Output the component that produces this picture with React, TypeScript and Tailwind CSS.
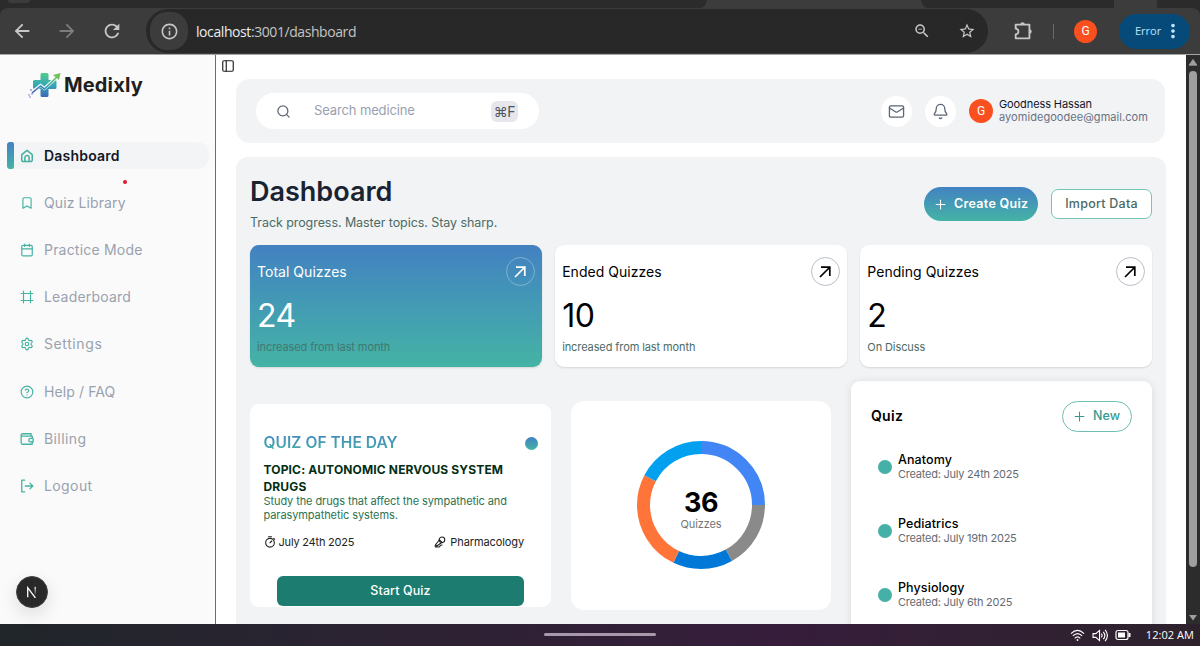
import React from "react";
import {
  PanelLeft, Search, Mail, Bell, Bookmark, Calendar, Frame, Settings, CircleQuestionMark, Plus,
} from "lucide-react";
import { MdArrowBack, MdArrowForward, MdRefresh, MdInfoOutline, MdOutlineZoomOut, MdStarBorder, MdMoreVert } from "react-icons/md";

const HomeIcon = () => (
  <svg viewBox="0 0 24 24" className="size-[14px]" fill="none" stroke="currentColor" strokeWidth="2.6" strokeLinecap="round" strokeLinejoin="round">
    <path d="M3 9.500 12 2.500l9 7V19a2.500 2.500 0 0 1-2.500 2.500h-13A2.500 2.500 0 0 1 3 19Z" />
    <path d="M8.300 21v-6a3.700 3.700 0 0 1 7.400 0v6" />
  </svg>
);
const WalletIcon = () => (
  <svg viewBox="0 0 24 24" className="size-[14px]" fill="none" stroke="currentColor" strokeWidth="2.200" strokeLinecap="round" strokeLinejoin="round">
    <path d="M19 7V3H4a2 2 0 0 0 0 4h17v4M2 5v14a2 2 0 0 0 2 2h17v-4" />
    <path d="M22.500 11H18a3 3 0 0 0 0 6h4.500Z" />
  </svg>
);
const LogoutIcon = () => (
  <svg viewBox="0 0 24 24" className="size-[14px]" fill="none" stroke="currentColor" strokeWidth="2.200" strokeLinecap="round" strokeLinejoin="round">
    <path d="M8 2H3v20h5M9 12h13M17 7l5 5-5 5" />
  </svg>
);
const StopwatchIcon = () => (
  <svg viewBox="0 0 24 24" className="size-[12px]" fill="none" stroke="currentColor" strokeWidth="2.200" strokeLinecap="round">
    <circle cx="12" cy="13.500" r="8.700" />
    <path d="M9 1.500h6M12 13.500l3.500-3.500M19.500 5l1.500 1.500" />
  </svg>
);
const VocalIcon = () => (
  <svg viewBox="0 0 24 24" className="size-[12px]" fill="none" stroke="currentColor" strokeWidth="2.200" strokeLinecap="round" strokeLinejoin="round">
    <circle cx="16" cy="7.500" r="5.500" />
    <path d="M10.500 8 3 17.500 5.500 20l10-7M10.500 7.500l6 6M3 17.500Q1 22 5 22h4q3 0 3-2t3-2h1" />
  </svg>
);

const nav = [
  { label: "Quiz Library", icon: <Bookmark size={14} />, cls: "tracking-[0.1px]" },
  { label: "Practice Mode", icon: <Calendar size={14} />, cls: "tracking-[0.2px]" },
  { label: "Leaderboard", icon: <Frame size={14} />, cls: "tracking-[0.2px]" },
  { label: "Settings", icon: <Settings size={14} />, cls: "tracking-[0.6px]" },
  { label: "Help / FAQ", icon: <CircleQuestionMark size={14} />, cls: "tracking-[0.1px]" },
  { label: "Billing", icon: <WalletIcon />, cls: "tracking-[0.4px]" },
  { label: "Logout", icon: <LogoutIcon />, cls: "tracking-[0.4px]" },
];

function Logo() {
  return (
    <svg viewBox="0 0 34 28" className="h-[28px] w-[34px]">
      <defs>
        <linearGradient id="cross" x1="0" y1="0" x2="0" y2="1">
          <stop offset="0" stopColor="#52c98f" />
          <stop offset="0.5" stopColor="#35a8b5" />
          <stop offset="1" stopColor="#3c67b8" />
        </linearGradient>
        <linearGradient id="trend" x1="0" y1="1" x2="1" y2="0">
          <stop offset="0" stopColor="#4b55b5" />
          <stop offset="0.5" stopColor="#2ba3b5" />
          <stop offset="1" stopColor="#78c850" />
        </linearGradient>
      </defs>
      <path d="M14 2h5q1.500 0 1.500 1.500V9h6.500q1.500 0 1.500 1.500v6q0 1.500-1.500 1.500h-6.500v6.500q0 1.500-1.500 1.500h-5q-1.500 0-1.500-1.500V18H6.500Q5 18 5 16.500v-6Q5 9 6.500 9h6V3.500Q12.500 2 14 2Z" fill="url(#cross)" />
      <path d="m3 22 9.500-7.500 4 3L29 6" fill="none" stroke="#fafafa" strokeWidth="3.200" />
      <path d="m4 22 8.500-7 4 3L30 5" fill="none" stroke="url(#trend)" strokeWidth="1.600" />
      <path d="m25 4 7.500-2-1.500 7Z" fill="#70c35a" />
      <g fill="#5561b5"><circle cx="3" cy="19" r="0.800" /><circle cx="1" cy="24" r="0.700" /><circle cx="4" cy="23" r="0.700" /><circle cx="2" cy="26" r="0.700" /></g>
    </svg>
  );
}

function BrowserBar() {
  return (
    <header className="h-[54px] shrink-0 bg-[#2b2b2b]">
      <div className="flex h-2">
        <div className="ml-2 h-[3px] w-[22px] rounded-b-full bg-[#3c3c3c]" />
        <svg viewBox="0 0 228 8" className="ml-[670px] h-2 w-[228px]"><path d="M0 8q6-1 7-8h214q1 7 7 8Z" fill="#3c3c3c" /></svg>
        <div className="ml-auto mr-[43px] h-2 w-[43px] bg-[#3c3c3c]" />
      </div>
      <div className="flex h-[46px] items-center rounded-t-lg bg-[#3c3c3c] text-[#c7c7c7]">
        <MdArrowBack size={22} className="ml-[11px]" />
        <MdArrowForward size={22} className="ml-[23px] text-[#7d7d7d]" />
        <MdRefresh size={22} className="ml-[23px]" />
        <div className="ml-[23px] flex h-[44px] w-[842px] items-center rounded-full bg-[#282828] pl-[4px]">
          <span className="flex size-[38px] items-center justify-center rounded-[17px] bg-[#3c3c3c]"><MdInfoOutline size={19} /></span>
          <span className="ml-[8px] font-['Open_Sans',sans-serif] text-[14px] tracking-[-0.420px] text-[#c4c4c4]"><span className="text-[#ececec]">localhost</span>:3001/dashboard</span>
          <MdOutlineZoomOut size={18} className="ml-auto" />
          <MdStarBorder size={18} className="mr-[12px] ml-[27px]" />
        </div>
        <svg viewBox="0 0 24 24" className="ml-[24px] size-[22px]" fill="none" stroke="currentColor" strokeWidth="2" strokeLinejoin="round">
          <path d="M4 5h15v15H4v-4.300q3-.4 3-3.200t-3-3.200Z" />
          <path d="M9 5a2.500 2.500 0 0 1 5 0ZM19 10a2.500 2.500 0 0 1 0 5Z" fill="currentColor" stroke="none" />
        </svg>
        <span className="ml-[19px] h-[15px] w-px bg-[#6b6b6b]" />
        <span className="ml-[20px] flex size-[23px] items-center justify-center rounded-full bg-[#fa4f1f] font-['Roboto',sans-serif] text-[12px] text-white">G</span>
        <div className="ml-[22px] flex h-[35px] w-[71px] items-center rounded-full bg-[#054a78] pl-[16px] font-['Open_Sans',sans-serif] text-[11px] text-[#bfe3fc]">
          Error
          <MdMoreVert size={22} className="ml-px" />
        </div>
      </div>
    </header>
  );
}

function Sidebar() {
  return (
    <aside className="relative mr-px flex h-full w-[216px] shrink-0 flex-col border-r border-[#6e6e6e] bg-[#fafafa]">
      <div className="mt-[16px] ml-[28px] flex h-[28px] items-center">
        <Logo />
        <span className="ml-[2px] font-['Inter',sans-serif] text-[20px] font-bold tracking-[0.150px] text-[#1f1f21]">Medixly</span>
      </div>
      <div className="mt-[43px] ml-[7px] flex h-[27px] items-center">
        <span className="h-full w-[7px] rounded-l-[3px] rounded-r-[2px] bg-linear-to-b from-[#4381c1] to-[#45b3a4]" />
        <div className="flex h-full w-[195px] items-center rounded-r-xl bg-[#f3f4f6] pl-[6px] text-[#45b0a0]">
          <HomeIcon />
          <span className="mb-px ml-[10px] text-[14px] font-semibold tracking-[0.200px] text-[#111827]">Dashboard</span>
        </div>
      </div>
      <nav className="mt-[20px] flex flex-col gap-[20.300px] pl-[20px]">
        {nav.map((n) => (
          <div key={n.label} className="flex h-[27px] items-center gap-[10px] text-[#45b3a4]">
            {n.icon}
            <span className={"mb-px text-[14px] text-[#99a1af] " + n.cls}>{n.label}</span>
          </div>
        ))}
      </nav>
      <span className="absolute top-[125px] left-[123px] size-1 rounded-full bg-[#e5142b]" />
      <span className="absolute top-[521px] left-[16px] flex size-8 items-center justify-center rounded-full border border-[#454545] bg-[#292929] shadow-[0_6px_18px_rgba(0,0,0,0.12)]">
        <svg viewBox="0 0 14 14" className="size-[12px]" fill="none" strokeWidth="1.500">
          <defs><linearGradient id="nr" x1="0" y1="0" x2="0" y2="1"><stop stopColor="#fff" /><stop offset="1" stopColor="#fff" stopOpacity="0" /></linearGradient></defs>
          <path d="M2 13V2l9 12" stroke="#fff" /><rect x="10" y="1" width="1.500" height="10" fill="url(#nr)" />
        </svg>
      </span>
    </aside>
  );
}

function TopBar() {
  return (
    <div className="mr-px flex h-[64px] items-center rounded-[14px] bg-[#f2f3f5] pr-[17px] pl-[20px]">
      <div className="flex h-[36px] w-[283px] items-center rounded-full bg-white pr-[21px] pl-[20px]">
        <Search size={15} className="text-[#5b6575]" />
        <span className="ml-[23px] text-[13px] tracking-[-0.130px] text-[#99a1af]">Search medicine</span>
        <kbd className="ml-auto flex h-[21px] w-[27px] items-center justify-center rounded-[6px] bg-[#e5e7eb] font-['Inter','DejaVu_Sans',sans-serif] text-[14px] tracking-[-0.300px] text-[#4a5565]">⌘F</kbd>
      </div>
      <span className="ml-auto flex size-[31px] items-center justify-center rounded-full bg-white text-[#5b6575]"><Mail size={17} strokeWidth={1.800} /></span>
      <span className="ml-[13px] flex size-[31px] items-center justify-center rounded-full bg-white text-[#5b6575]"><Bell size={17} strokeWidth={1.800} /></span>
      <span className="ml-[13px] flex size-[24px] items-center justify-center rounded-full bg-[#fa4f1f] font-['Roboto',sans-serif] text-[12px] text-white">G</span>
      <div className="ml-[6px] w-[149px] text-[11px] leading-[13.500px] whitespace-nowrap">
        <p className="tracking-[-0.100px] text-[#101828]">Goodness Hassan</p>
        <p className="tracking-[0.050px] text-[#6a7282]">ayomidegoodee@gmail.com</p>
      </div>
    </div>
  );
}

const stats = [
  { title: "Total Quizzes", value: "24", note: "increased from last month", active: true },
  { title: "Ended Quizzes", value: "10", note: "increased from last month", active: false },
  { title: "Pending Quizzes", value: "2", note: "On Discuss", active: false },
];

function StatCard({ s }: { s: (typeof stats)[number] }) {
  return (
    <div className={"flex h-[122px] flex-col rounded-[9px] px-[7px] pt-[12px] shadow-[0_1px_2px_rgba(0,0,0,0.12)] " + (s.active ? "bg-linear-to-b from-[#4381c1] to-[#45b3a4] text-white" : "bg-white text-black")}>
      <div className="flex h-[29px] items-center justify-between">
        <span className="text-[14px] tracking-[0.030px]">{s.title}</span>
        <span className={"flex size-[29px] items-center justify-center rounded-full border " + (s.active ? "border-white/30" : "border-[#b8bec8]")}>
          <svg viewBox="0 0 14 14" className="size-[14px]" fill="none" stroke="currentColor" strokeWidth="1.700"><path d="m2 12 9.500-9.500M3 2.200h8.800V11" /></svg>
        </span>
      </div>
      <span className="mt-[11px] text-[32px] leading-[38px] tracking-[-0.500px]">{s.value}</span>
      <span className={"mt-[5px] text-[11px] leading-[14px] tracking-[-0.100px] " + (s.active ? "text-[#41786f]" : "text-[#4b6b66]")}>{s.note}</span>
    </div>
  );
}

const segments = [
  { from: 0, len: 90, color: "#4285f4" },
  { from: 90, len: 61, color: "#8a8a8a" },
  { from: 151, len: 54.6, color: "#0078d7" },
  { from: 205.6, len: 92.2, color: "#ff7439" },
  { from: 297.8, len: 62.2, color: "#03a0f0" },
];

function Donut() {
  return (
    <div className="mt-[20px] flex h-[209px] w-[260px] items-center justify-center rounded-[13px] bg-white">
      <div className="mb-[2px] grid place-items-center">
        <svg viewBox="0 0 128 128" className="col-start-1 row-start-1 size-[128px] -rotate-90">
          {segments.map((g) => (
            <circle key={g.from} cx="64" cy="64" r="57.500" fill="none" stroke={g.color} strokeWidth="13" pathLength="360" strokeDasharray={`${g.len} ${360 - g.len}`} strokeDashoffset={-g.from} />
          ))}
        </svg>
        <div className="col-start-1 row-start-1 flex flex-col items-center pt-[11px]">
          <span className="text-[27px] leading-[28px] font-bold tracking-[-0.600px] text-black">36</span>
          <span className="text-[11px] leading-[14px] tracking-[-0.100px] text-[#757575]">Quizzes</span>
        </div>
      </div>
    </div>
  );
}

const quizzes = [
  { name: "Anatomy", date: "Created: July 24th 2025" },
  { name: "Pediatrics", date: "Created: July 19th 2025" },
  { name: "Physiology", date: "Created: July 6th 2025" },
];

export default function App() {
  return (
    <div className="flex h-[646px] w-[1200px] flex-col overflow-hidden bg-white font-['Inter',sans-serif] antialiased">
      <BrowserBar />
      <div className="flex h-[570px] shrink-0 border-t border-[#a5a5a5]">
        <Sidebar />
        <main className="h-[569px] w-[969px] overflow-hidden bg-white">
          <PanelLeft size={14} className="mt-[4px] ml-[4px] text-[#222]" />
          <div className="mt-[6px] ml-[19px] w-[930px]">
            <TopBar />
            <section className="mt-[14px] mr-[0.500px] h-[480px] rounded-t-[12px] bg-[#f2f3f5] pr-[13.500px] pl-[14px]">
              <div className="flex h-[88px] justify-between">
                <div className="pt-[18px]">
                  <h1 className="text-[27px] leading-[34px] font-semibold tracking-[0px] text-[#1a2331]">Dashboard</h1>
                  <p className="mt-[5px] text-[12.500px] leading-[18px] tracking-[-0.070px] text-[#4b6b66]">Track progress. Master topics. Stay sharp.</p>
                </div>
                <div className="flex items-center gap-[13px] pt-[6px]">
                  <button className="flex h-[34px] w-[114px] items-center rounded-full bg-linear-to-b from-[#4381c1] to-[#45b3a4] pl-[9px] text-[12.500px] font-semibold tracking-[0.300px] whitespace-nowrap text-white"><Plus size={15} strokeWidth={1.700} className="mr-[6px]" />Create Quiz</button>
                  <button className="h-[30px] w-[101px] rounded-[7px] border border-[#76c5ba] bg-white text-[12.500px] font-medium tracking-[0.250px] text-[#4b6b66]">Import Data</button>
                </div>
              </div>
              <div className="grid grid-cols-3 gap-[13.500px]">{stats.map((s) => <StatCard key={s.title} s={s} />)}</div>
              <div className="mt-[14px] flex items-start">
                <div className="mt-[23px] h-[203px] w-[301px] rounded-[9px] bg-white px-[13.500px] pt-[28px]">
                  <div className="flex h-[22px] items-center justify-between">
                    <span className="bg-linear-to-b from-[#4381c1] to-[#45b3a4] bg-clip-text text-[15.500px] font-semibold tracking-[0.050px] text-transparent">QUIZ OF THE DAY</span>
                    <span className="size-[13px] rounded-full bg-linear-to-b from-[#4381c1] to-[#45b3a4]" />
                  </div>
                  <p className="mt-[7px] text-[12px] leading-[17px] font-bold tracking-[0.150px] whitespace-nowrap text-[#032e15]">TOPIC: AUTONOMIC NERVOUS SYSTEM<br />DRUGS</p>
                  <p className="text-[11px] leading-[13.500px] tracking-[-0.090px] whitespace-nowrap text-[#2b7350]">Study the drugs that affect the sympathetic and<br />parasympathetic systems.</p>
                  <div className="mt-[13px] flex h-[14px] items-center justify-between pr-[13.500px] text-[11px] text-[#222]">
                    <span className="flex items-center gap-[3px] tracking-[-0.200px]"><StopwatchIcon />July 24th 2025</span>
                    <span className="flex items-center gap-[4px] tracking-[-0.100px]"><VocalIcon />Pharmacology</span>
                  </div>
                  <button className="mt-[27px] ml-[13.500px] h-[30px] w-[247px] rounded-[6px] bg-[#1c7c70] text-[12.500px] font-medium tracking-[0.100px] text-white">Start Quiz</button>
                </div>
                <div className="ml-[20px]"><Donut /></div>
                <div className="ml-[20px] h-[260px] w-[301px] rounded-t-[9px] bg-white pt-[20px] shadow-[0_1px_8px_rgba(0,0,0,0.10)]">
                  <div className="flex items-center justify-between px-[20px]">
                    <span className="mb-[2px] text-[14px] font-semibold tracking-[0.300px] text-black">Quiz</span>
                    <button className="flex h-[31px] w-[70px] items-center rounded-full border border-[#70beb4] pl-[9px] text-[12.500px] font-medium tracking-[0.100px] text-[#369b8e]"><Plus size={15} strokeWidth={1.700} className="mr-[6px]" />New</button>
                  </div>
                  <div className="mt-[20px] flex flex-col gap-[34px] pl-[27px]">
                    {quizzes.map((q) => (
                      <div key={q.name} className="flex h-[30px] items-center gap-[6px]">
                        <span className="size-[14px] rounded-full bg-[#45b0a5]" />
                        <div className="leading-[15px]">
                          <p className="text-[12.500px] font-medium tracking-[0.100px] text-black">{q.name}</p>
                          <p className="text-[11px] tracking-[-0.240px] text-[#646b73]">{q.date}</p>
                        </div>
                      </div>
                    ))}
                  </div>
                </div>
              </div>
            </section>
          </div>
        </main>
        <div className="flex w-[14px] flex-col items-center bg-[#2c2c2c] pt-[4px] pb-[3px]">
          <svg viewBox="0 0 10 8" className="h-[7px] w-[10px] fill-[#9f9f9f]"><path d="M5 0.500 9.500 7h-9Z" stroke="#9f9f9f" strokeLinejoin="round" /></svg>
          <span className="mt-[5px] h-[496px] w-[8px] rounded-full bg-[#9f9f9f]" />
          <svg viewBox="0 0 10 8" className="mt-auto h-[7px] w-[10px] fill-[#9f9f9f]"><path d="M5 7.500 0.500 1h9Z" /></svg>
        </div>
      </div>
      <footer className="grid h-[22px] grid-cols-[1fr_112px_1fr] items-center bg-linear-to-r from-[#20262a] via-[#361d3b] via-65% to-[#2d222c]">
        <span />
        <span className="mb-px h-[3px] rounded-full bg-[#a798ab]" />
        <div className="flex items-center justify-end pr-[6px] text-white">
          <svg viewBox="0 0 16 14" className="h-[13px] w-[15px]" fill="none" stroke="currentColor" strokeWidth="1.200"><path d="M1 5q7-7 14 0M3 7.500q5-5 10 0M5 10q3-3 6 0" /><circle cx="8" cy="11.800" r="1" fill="currentColor" stroke="none" /></svg>
          <svg viewBox="0 0 17 14" className="ml-[7px] h-[13px] w-[16px]" fill="none" stroke="currentColor" strokeWidth="1.200"><path d="M1 5h3l4-3.500v11L4 9H1ZM10 5q1.500 2 0 4M12 3q3.500 4 0 8M14 1q5 6 0 12" /></svg>
          <svg viewBox="0 0 16 12" className="ml-[7px] h-[12px] w-[16px]" fill="none" stroke="currentColor" strokeWidth="1.200"><rect x="1" y="1.500" width="12" height="9" rx="2" /><rect x="3" y="3.500" width="7" height="5" fill="currentColor" stroke="none" /><path d="M14.500 4v4" strokeWidth="2" /></svg>
          <span className="ml-[15px] font-['Open_Sans',sans-serif] text-[11px] tracking-[0.050px]">12:02 AM</span>
        </div>
      </footer>
    </div>
  );
}
